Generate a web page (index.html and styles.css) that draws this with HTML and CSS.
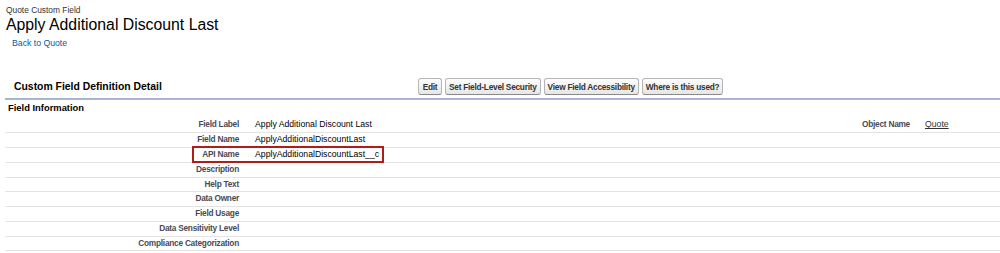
FILE: index.html
```html
<!DOCTYPE html>
<html lang="en">
<head>
  <meta charset="UTF-8" />
  <title>Apply Additional Discount Last ~ Custom Field</title>
  <link rel="stylesheet" href="styles.css">
</head>
<body>
  <div class="page-head">
    <div class="page-type">Quote Custom Field</div>
    <h1>Apply Additional Discount Last</h1>
    <a class="back-link" href="#">Back to Quote</a>
  </div>

  <div class="block">
    <div class="block-header">
      <h2>Custom Field Definition Detail</h2>
      <div class="buttons">
        <button>Edit</button>
        <button>Set Field-Level Security</button>
        <button>View Field Accessibility</button>
        <button>Where is this used?</button>
      </div>
    </div>
    <div class="block-body">
      <h3>Field Information</h3>
      <table class="detail">
        <colgroup>
          <col class="c-label"><col class="c-value"><col class="c-label2"><col class="c-value2">
        </colgroup>
        <tr>
          <td class="label">Field Label</td><td class="value">Apply Additional Discount Last</td>
          <td class="label">Object Name</td><td class="value"><a href="#">Quote</a></td>
        </tr>
        <tr>
          <td class="label">Field Name</td><td class="value">ApplyAdditionalDiscountLast</td>
          <td class="label"></td><td class="value"></td>
        </tr>
        <tr class="marked">
          <td class="label"><span class="mark"></span>API Name</td><td class="value">ApplyAdditionalDiscountLast__c</td>
          <td class="label"></td><td class="value"></td>
        </tr>
        <tr><td class="label">Description</td><td class="value"></td><td class="label"></td><td class="value"></td></tr>
        <tr><td class="label">Help Text</td><td class="value"></td><td class="label"></td><td class="value"></td></tr>
        <tr><td class="label">Data Owner</td><td class="value"></td><td class="label"></td><td class="value"></td></tr>
        <tr><td class="label">Field Usage</td><td class="value"></td><td class="label"></td><td class="value"></td></tr>
        <tr><td class="label">Data Sensitivity Level</td><td class="value"></td><td class="label"></td><td class="value"></td></tr>
        <tr><td class="label">Compliance Categorization</td><td class="value"></td><td class="label"></td><td class="value"></td></tr>
      </table>
    </div>
  </div>
</body>
</html>
```

FILE: styles.css
```css
* { box-sizing: border-box; margin: 0; padding: 0; }
body { font-family: "Liberation Sans", Arial, sans-serif; background: #fff; color: #000; font-size: 9px; }
.page-head { padding: 5px 0 0 6px; height: 70px; }
.page-type { font-size: 8.4px; line-height: 10px; color: #333; }
h1 { font-size: 15.8px; font-weight: normal; line-height: 20px; color: #000; }
.back-link { display: inline-block; margin: 3px 0 0 6px; font-size: 8.7px; line-height: 11px; color: #015ba7; text-decoration: none; }

.block { padding-left: 5px; }
.block-header { display: flex; align-items: center; height: 30px; padding-top: 5px; border-bottom: 2px solid #a7b6d3; }
.block-header h2 { width: 413px; padding-left: 9px; font-size: 10.4px; font-weight: bold; color: #000; }
.buttons { display: flex; gap: 3px; }
button { font-family: "Liberation Sans", Arial, sans-serif; font-size: 8.3px; letter-spacing: -0.25px; font-weight: bold; color: #333; height: 17px; min-width: 24px; padding: 0 3px; background: linear-gradient(#fdfdfd, #e6e6e6); border: 1px solid #b5b5b5; border-bottom-color: #8a8a8a; border-radius: 3px; cursor: pointer; }

.block-body h3 { font-size: 9.4px; font-weight: bold; line-height: 13px; padding: 1px 0 2px 3px; color: #000; height: 18px; }
.detail { width: 995px; border-collapse: collapse; table-layout: fixed; }
.c-label { width: 242px; }
.c-label2 { width: 150px; }
.c-value2 { width: 82px; }
.detail td { border-bottom: 1px solid #e3e3e3; line-height: 11.75px; padding-top: 1px; padding-bottom: 1px; height: 14.75px; white-space: nowrap; }
.detail td.label { text-align: right; padding-right: 8px; font-weight: bold; color: #4a4a56; font-size: 8.3px; letter-spacing: -0.25px; }
.detail td.value { padding-left: 8px; font-size: 8.7px; color: #000; }
.detail td.value a { color: #333; text-decoration: underline; letter-spacing: 0; }
.detail tr td:nth-child(4) { padding-left: 7px; }
.marked td.label { position: relative; }
.mark { position: absolute; left: 187px; top: -2px; width: 192px; height: 17px; border: 2px solid #b31b1b; }
```
